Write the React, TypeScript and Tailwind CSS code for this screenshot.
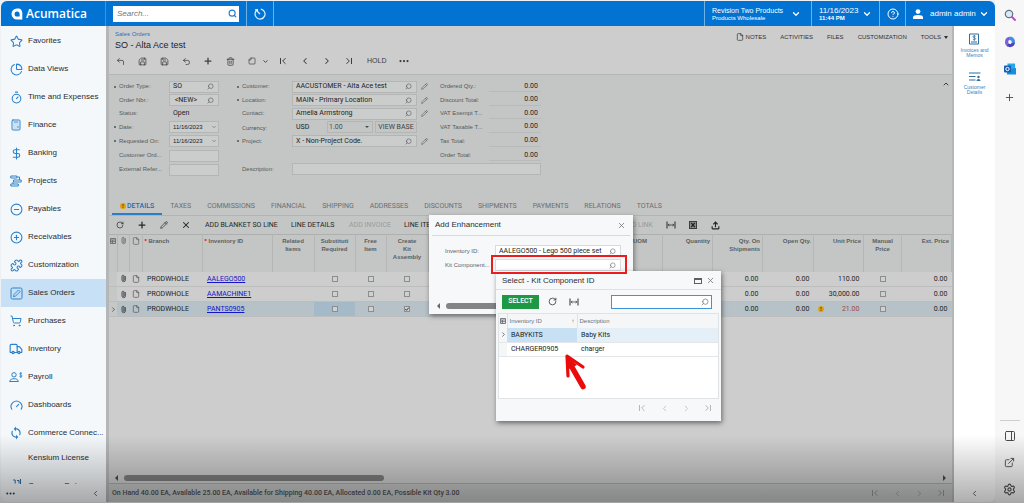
import { ReactNode } from 'react';
import {
  Calculator,
  ChartPie,
  ChevronDown,
  ChevronLeft,
  ChevronRight,
  ChevronUp,
  CircleHelp,
  CircleMinus,
  CirclePlus,
  CornerUpLeft,
  DollarSign,
  Ellipsis,
  ExternalLink,
  File,
  Gauge,
  PanelRight,
  Paperclip,
  Pencil,
  Plus,
  Puzzle,
  RotateCw,
  Save,
  Search,
  Settings,
  ShoppingCart,
  Star,
  StickyNote,
  Timer,
  Trash2,
  Truck,
  Undo2,
  Upload,
  X,
} from 'lucide-react';
import { MdSync } from 'react-icons/md';

const body = "font-['Roboto','Liberation_Sans',sans-serif] text-[7px]";

/* ---------- small drawings ---------- */

function StepIcon({ dir }: { dir: 'first' | 'last' }) {
  return (
    <svg viewBox="0 0 8 8" className={`size-2 ${dir === 'last' ? '-scale-x-100' : ''}`} fill="none" stroke="currentColor">
      <path d="M1.5 1v6M6.5 1.2 3.7 4l2.8 2.8" />
    </svg>
  );
}

function FitIcon() {
  return (
    <svg viewBox="0 0 10 8" className="h-2 w-2.5" fill="none" stroke="currentColor">
      <path d="M1 .5v7M9 .5v7" />
      <path d="M2 4h6M3.400 2.800 2.200 4l1.200 1.200M6.600 2.800 7.800 4 6.600 5.200" strokeWidth=".7" />
    </svg>
  );
}

function SheetIcon() {
  return (
    <svg viewBox="0 0 8 8" className="size-2">
      <rect x=".5" y=".5" width="7" height="7" fill="#8b8d8c" stroke="#3c3e3d" />
      <path d="m2.2 1.8 3.6 4.4M5.8 1.8 2.2 6.2" stroke="#202221" strokeWidth="1.3" />
    </svg>
  );
}

function GridIcon() {
  return (
    <svg viewBox="0 0 6 6" className="mx-auto size-1.5" fill="none" stroke="#5f6366" strokeWidth=".8">
      <path d="M.5.5h5v5h-5zM.5 2h5M.5 3.7h5M2.4 2v3.5" />
    </svg>
  );
}

function WarnIcon() {
  return (
    <svg viewBox="0 0 6 6" className="size-1.5 shrink-0">
      <circle cx="3" cy="3" r="3" fill="#e0a00c" />
      <path d="M3 1v2.4M3 4.1V5" stroke="#5c4204" strokeWidth=".9" />
    </svg>
  );
}

function ProjectsIcon() {
  return (
    <svg viewBox="0 0 12 12" className="size-3" fill="none" stroke="currentColor">
      <path d="M.8 1h6v2h-6zM3.5 5h7.700v2H3.500zM.8 9h7.500v2H.8zM7 2h2.500v3M3 7v2" />
    </svg>
  );
}

function SalesIcon() {
  return (
    <svg viewBox="0 0 13 13" className="size-[13px]" fill="none" stroke="currentColor">
      <rect x="1" y="1" width="11" height="11" rx="1.500" />
      <path d="m3.500 9.700.5-2.200L8.500 3l1.600 1.600-4.500 4.500z" strokeWidth=".9" />
    </svg>
  );
}

function PayrollIcon() {
  return (
    <svg viewBox="0 0 14 12" className="h-3 w-3.5" fill="none" stroke="currentColor">
      <circle cx="5" cy="3.800" r="2.200" />
      <path d="M.6 10.500c.4-2 2.200-2.800 4.400-2.800s4 .8 4.400 2.800z" />
      <path d="M13 2.600c-.4-.6-2.400-.7-2.400.4S13.100 3.900 13.100 5s-2.200 1.100-2.700.3M11.800 1v6" strokeWidth=".8" />
    </svg>
  );
}

function CommunityIcon() {
  return (
    <svg viewBox="0 0 12 6" className="h-1.5 w-3" fill="none" stroke="currentColor">
      <path d="M1 5.500h3M3.200 1h2v3.500M7 1.500h2v3M10.500 0v6M6.500 5.500h4" />
    </svg>
  );
}

function LogoMark() {
  return (
    <svg viewBox="0 0 12 12" className="size-3 shrink-0">
      <path d="M6 .5h1.500c2 0 3.800 2 3.800 4.500v6.500H6A5.500 5.500 0 0 1 6 .5Z" fill="#fff" />
      <path d="M6.100 3.400c1.600 0 2.500 1 2.500 2.500v2.600H6.100a2.500 2.500 0 0 1 0-5.100Z" fill="#0273d3" />
    </svg>
  );
}

function UserIcon() {
  return (
    <svg viewBox="0 0 10 10" className="size-2.5 shrink-0" fill="#fff">
      <circle cx="5" cy="2.600" r="2.400" />
      <path d="M0 10V8.300C0 6.700 2 5.900 5 5.900s5 .8 5 2.400V10z" />
    </svg>
  );
}

function HistoryIcon() {
  return (
    <svg viewBox="0 0 12 12" className="size-3" fill="none" stroke="#e3f0fb" strokeWidth="1.200">
      <path d="M3.200 1.900A5 5 0 1 0 6.800 1.100M1 1.800l2.400-.1.200 2.400M6 6.200 4 4" />
    </svg>
  );
}

function InvoiceIcon() {
  return (
    <svg viewBox="0 0 12 12" className="size-3" fill="none" stroke="#2f6e9e">
      <path d="M1.500 1h9v10h-9zM3 9h6" />
      <path d="M7.600 3.200c-.5-.6-2.600-.6-2.600.5s2.700.7 2.700 1.900-2.300 1.200-2.900.4M6.300 2v6" strokeWidth=".8" />
    </svg>
  );
}

function CustomerIcon() {
  return (
    <svg viewBox="0 0 12 10" className="h-2.5 w-3" fill="none" stroke="#2f6e9e" strokeWidth="1.100">
      <path d="M0 1h11.500M0 4.500h6.500M0 8h6.500" />
      <circle cx="9.500" cy="5" r="1.200" fill="#2f6e9e" stroke="none" />
      <path d="M7.500 9c0-2.800 4-2.800 4 0z" fill="#2f6e9e" stroke="none" />
    </svg>
  );
}

function OfficeIcon() {
  return (
    <svg viewBox="0 0 12 12" className="size-3">
      <path d="M5.500.8C3 1 1 2.800 1 6c0 1.800.6 3 1.800 4 .2-1.500.9-2.300 1.700-2.800C4 6 4.200 4.600 5.300 4.100L8 3z" fill="#7a5fd6" />
      <path d="M5.500.8C8.500.4 11 2.500 11 6v1.200L7.800 6.400C7.900 5 7 4 5.300 4.100 4.800 3 4.700 1.800 5.500.8z" fill="#3f8fe8" />
      <path d="M11 6.800c-.3 2.600-2.300 4.400-5 4.400-1.400 0-2.400-.4-3.200-1.200.2-1.500.9-2.300 1.700-2.800 1 1.200 2.600 1 3.300-.8z" fill="#4a46b8" />
    </svg>
  );
}

function OutlookIcon() {
  return (
    <svg viewBox="0 0 12 12" className="size-3">
      <path d="M3.500.5H11V7H3.500z" fill="#28a8ea" />
      <path d="M3 6.500 12 5v6.500H3z" fill="#1490df" />
      <rect y="2.500" width="7" height="7" rx="1" fill="#0f5fb4" />
      <circle cx="3.500" cy="6" r="1.700" fill="none" stroke="#fff" />
    </svg>
  );
}

/* ---------- shared parts ---------- */

function IconButton({ label, className = 'w-[22px]', children }: { label: string; className?: string; children: ReactNode }) {
  return (
    <button type="button" aria-label={label} className={`flex h-3.5 shrink-0 items-center justify-center ${className}`}>
      {children}
    </button>
  );
}

function Label({ id, required, children }: { id?: string; required?: boolean; children: ReactNode }) {
  return (
    <label htmlFor={id} className="flex w-[55px] shrink-0 items-center text-[6px] whitespace-nowrap text-[#56595a]">
      <span className="flex w-[5px] shrink-0">{required && <span className="size-0.5 rounded-full bg-[#4d5051]" />}</span>
      {children}
    </label>
  );
}

type FieldIcon = 'search' | 'date';

interface FieldProps {
  id: string;
  label: string;
  value?: string;
  required?: boolean;
  icon?: FieldIcon;
  edit?: boolean;
  width?: string;
}

function Field({ id, label, value = '', required, icon, edit, width = 'w-[50px]' }: FieldProps) {
  return (
    <div className="flex items-center">
      <Label id={id} required={required}>{label}</Label>
      <div className={`flex h-3 items-center border border-[#b4b6b6] bg-[#cbcccc] ${icon === 'date' ? 'pr-px' : 'pr-1'} ${width}`}>
        <input
          id={id}
          defaultValue={value}
          className={`w-full min-w-0 bg-transparent pl-[3px] text-[#1b1d1e] outline-none ${icon === 'date' ? 'text-[6px] font-medium' : body}`}
        />
        {icon === 'search' && <Search size={7} className="shrink-0 -scale-x-100 text-[#55585a]" />}
        {icon === 'date' && <ChevronDown size={6} className="shrink-0 text-[#55585a]" />}
      </div>
      {edit && (
        <button type="button" aria-label={`Edit ${label}`} className="ml-1">
          <Pencil size={7} strokeWidth={2} className="text-[#55585a]" />
        </button>
      )}
    </div>
  );
}

/* ---------- left navigation ---------- */

const navItems: { label: string; icon: ReactNode; active?: boolean }[] = [
  { label: 'Favorites', icon: <Star size={13} /> },
  { label: 'Data Views', icon: <ChartPie size={13} /> },
  { label: 'Time and Expenses', icon: <Timer size={13} /> },
  { label: 'Finance', icon: <Calculator size={12} /> },
  { label: 'Banking', icon: <DollarSign size={13} /> },
  { label: 'Projects', icon: <ProjectsIcon /> },
  { label: 'Payables', icon: <CircleMinus size={13} /> },
  { label: 'Receivables', icon: <CirclePlus size={13} /> },
  { label: 'Customization', icon: <Puzzle size={13} /> },
  { label: 'Sales Orders', icon: <SalesIcon />, active: true },
  { label: 'Purchases', icon: <ShoppingCart size={12} /> },
  { label: 'Inventory', icon: <Truck size={14} /> },
  { label: 'Payroll', icon: <PayrollIcon /> },
  { label: 'Dashboards', icon: <Gauge size={13} /> },
  { label: 'Commerce Connec...', icon: <MdSync size={14} /> },
];

function Sidebar() {
  return (
    <aside className="flex w-[105px] shrink-0 flex-col bg-[#f5f8fb]">
      <nav className="min-h-0 flex-1 overflow-hidden pt-px">
        {navItems.map((item) => (
          <a
            key={item.label}
            href="#"
            className={`flex h-7 items-center text-[8px] whitespace-nowrap text-[#262d33] ${item.active ? 'bg-[#c7e0f5]' : ''}`}
          >
            <span className="flex w-[27px] shrink-0 items-center justify-center pl-[3px] text-[#2b82cc]">{item.icon}</span>
            {item.label}
          </a>
        ))}
        <a href="#" className="flex h-[22px] items-center pl-[27px] text-[8px] text-[#262d33]">Kensium License</a>
        <a href="#" className="flex items-start pt-2.5 text-[8px] leading-[10px] text-[#262d33]">
          <span className="flex w-[27px] shrink-0 justify-center pl-[3px] text-[#2b6ca3]"><CommunityIcon /></span>
          <span className="pt-0.5">Company Data</span>
        </a>
      </nav>
      <div className="flex h-[18px] shrink-0 items-center justify-between pr-1.5 pl-1 text-[#3b3f42]">
        <button type="button" aria-label="More items"><Ellipsis size={11} strokeWidth={2.5} /></button>
        <button type="button" aria-label="Collapse menu"><ChevronLeft size={9} /></button>
      </div>
    </aside>
  );
}

/* ---------- top bar ---------- */

function TopBar() {
  return (
    <header className="flex h-[25px] shrink-0 items-stretch rounded-t-md bg-[#0273d3] text-white">
      <a href="#" className="flex w-[105px] items-center gap-[3px] border-r border-[#3c94dd] pl-2.5">
        <LogoMark />
        <span className="font-['Open_Sans','Noto_Sans',sans-serif] text-[12px] leading-none font-semibold">Acumatica</span>
      </a>
      <div className="flex w-[141px] items-center border-r border-[#6fb0e6] pl-[7px]">
        <div className="flex h-4 w-[126px] items-center bg-white pr-0.5">
          <input aria-label="Search" placeholder="Search..." className="w-full min-w-0 pl-1 text-[8px] text-[#333] italic outline-none placeholder:text-[#6f7479]" />
          <Search size={9} strokeWidth={3} className="shrink-0 text-[#2a7ecb]" />
        </div>
      </div>
      <button type="button" aria-label="Recent" className="flex w-[27px] items-center justify-center border-r border-[#6fb0e6]"><HistoryIcon /></button>
      <div className="flex-1" />
      <button type="button" className="flex w-[107px] items-center border-l border-[#6fb0e6] pl-[7px] text-left">
        <span className="w-[79px] leading-none whitespace-nowrap">
          <span className="block text-[7px] leading-[9px]">Revision Two Products</span>
          <span className="block text-[6px] leading-[7px] font-medium">Products Wholesale</span>
        </span>
        <ChevronDown size={10} strokeWidth={3} />
      </button>
      <button type="button" className="flex w-[68px] items-center border-l border-[#6fb0e6] pl-[7px] text-left">
        <span className="w-[43px]">
          <span className="block text-[8px] leading-[9px]">11/16/2023</span>
          <span className="block text-[6px] leading-[7px] font-bold">11:44 PM</span>
        </span>
        <ChevronDown size={10} strokeWidth={3} />
      </button>
      <button type="button" aria-label="Help" className="flex w-[26px] items-center justify-center border-l border-[#6fb0e6]"><CircleHelp size={12} /></button>
      <button type="button" className="flex w-[90px] items-center border-l border-[#6fb0e6] pl-[7px] text-[8px]">
        <UserIcon />
        <span className="w-[54px] pl-[7px] text-left whitespace-nowrap">admin admin</span>
        <ChevronDown size={10} strokeWidth={3} className="ml-0.5" />
      </button>
    </header>
  );
}

/* ---------- document header and form ---------- */

function DocumentHeader() {
  return (
    <div className="flex h-[49px] shrink-0 justify-between border-b border-[#b4b5b5] pr-1 pl-1.5">
      <div>
        <a href="#" className="mt-1 block h-2 text-[6px] leading-[8px] text-[#2a73b4]">Sales Orders</a>
        <h1 className="mt-px h-3 text-[9px] leading-3 text-[#212325]">SO - Alta Ace test</h1>
        <div className="mt-[3px] -ml-1.5 flex items-center text-[#3b3e40]">
          <IconButton label="Back"><CornerUpLeft size={9} /></IconButton>
          <IconButton label="Save and close"><Save size={9} className="-scale-x-100" /></IconButton>
          <IconButton label="Save"><Save size={9} /></IconButton>
          <IconButton label="Undo"><Undo2 size={9} /></IconButton>
          <IconButton label="Add"><Plus size={10} strokeWidth={3} /></IconButton>
          <IconButton label="Delete"><Trash2 size={9} /></IconButton>
          <IconButton label="Copy"><StickyNote size={8} className="-scale-x-100" /></IconButton>
          <IconButton label="Copy options" className="w-[5px]"><ChevronDown size={7} strokeWidth={3} className="shrink-0" /></IconButton>
          <IconButton label="First record" className="ml-1 w-[22px]"><StepIcon dir="first" /></IconButton>
          <IconButton label="Previous record"><ChevronLeft size={10} strokeWidth={2.5} /></IconButton>
          <IconButton label="Next record"><ChevronRight size={10} strokeWidth={2.5} /></IconButton>
          <IconButton label="Last record"><StepIcon dir="last" /></IconButton>
          <button type="button" className="ml-[7px] text-[7px]">HOLD</button>
          <IconButton label="More actions" className="ml-2 w-5"><Ellipsis size={12} strokeWidth={2.5} /></IconButton>
        </div>
      </div>
      <div className="mt-1.5 flex h-2.5 items-center gap-3.5 text-[6px] font-medium text-[#2d3032]">
        <button type="button" className="flex items-center gap-0.5"><File size={8} /> NOTES</button>
        <button type="button">ACTIVITIES</button>
        <button type="button">FILES</button>
        <button type="button">CUSTOMIZATION</button>
        <button type="button" className="flex items-center gap-[3px]">
          TOOLS
          <span className="border-x-2 border-t-[3px] border-x-transparent border-t-current" />
        </button>
      </div>
    </div>
  );
}

const totals = ['Ordered Qty.:', 'Discount Total:', 'VAT Exempt T...', 'VAT Taxable T...', 'Tax Total:', 'Order Total:'];

function OrderForm() {
  return (
    <form className="flex pt-[5px] pl-[5px]">
      <div className="mr-[18px] grid grid-rows-[13px_14px_13px_14px_14px_15px_13px]">
        <Field id="type" label="Order Type:" value="SO" required icon="search" />
        <Field id="nbr" label="Order Nbr.:" value=" <NEW>" icon="search" />
        <div className="flex items-center">
          <Label>Status:</Label>
          <span className={`pl-1 text-[#1b1d1e] ${body}`}>Open</span>
        </div>
        <Field id="date" label="Date:" value="11/16/2023" required icon="date" />
        <Field id="requested" label="Requested On:" value="11/16/2023" required icon="date" />
        <Field id="custord" label="Customer Ord..." />
        <Field id="extref" label="External Refer..." />
      </div>
      <div>
        <div className="flex">
          <div className="mr-3 grid grid-rows-[13px_14px_13px_14px_14px_15px]">
            <Field id="customer" label="Customer:" value="AACUSTOMER - Alta Ace test" required icon="search" edit width="w-[125px]" />
            <Field id="location" label="Location:" value="MAIN - Primary Location" required icon="search" edit width="w-[125px]" />
            <Field id="contact" label="Contact:" value="Amelia Armstrong" icon="search" edit width="w-[125px]" />
            <div className={`flex items-center text-[#1b1d1e] ${body}`}>
              <Label id="rate">Currency:</Label>
              <span className="w-[35px] pl-1">USD</span>
              <div className="flex h-3 w-[46px] items-center border border-[#b4b6b6]">
                <select id="rate" className="w-full appearance-none pl-px text-[#4a4d4f]">
                  <option>1.00</option>
                </select>
                <span className="mr-[3px] border-x-2 border-t-2 border-x-transparent border-t-[#4a4d4f]" />
              </div>
              <button type="button" className="ml-0.5 h-3 w-[42px] border border-[#b4b6b6] whitespace-nowrap text-[#3f4244]">VIEW BASE</button>
            </div>
            <Field id="project" label="Project:" value="X - Non-Project Code." required icon="search" edit width="w-[125px]" />
          </div>
          <dl className="grid w-[101px] grid-rows-[13px_14px_13px_14px_14px_15px]">
            {totals.map((t) => (
              <div key={t} className="flex items-center text-[6px] text-[#56595a]">
                <dt className="w-[49px] whitespace-nowrap">{t}</dt>
                <dd className={`flex-1 border-b border-[#b9bbbb] pr-[3px] text-right text-[#1b1d1e] ${body}`}>0.00</dd>
              </div>
            ))}
          </dl>
        </div>
        <Field id="desc" label="Description:" width="w-[249px]" />
      </div>
      <button type="button" aria-label="Collapse form" className="mr-0.5 ml-auto h-2 text-[#3b3e40]"><ChevronUp size={8} strokeWidth={3} /></button>
    </form>
  );
}

/* ---------- order lines ---------- */

const tabs = ['TAXES', 'COMMISSIONS', 'FINANCIAL', 'SHIPPING', 'ADDRESSES', 'DISCOUNTS', 'SHIPMENTS', 'PAYMENTS', 'RELATIONS', 'TOTALS'];

const lines = [
  { id: 'AALEGO500', price: '110.00', kit: false },
  { id: 'AAMACHINE1', price: '30,000.00', kit: false },
  { id: 'PANTS0905', price: '21.00', kit: true },
];

function Check({ label, checked = false }: { label: string; checked?: boolean }) {
  return (
    <span className="relative mx-auto flex size-1.5">
      <input
        type="checkbox"
        aria-label={label}
        defaultChecked={checked}
        className="size-1.5 appearance-none border border-[#8b8e90] bg-[#cfd0d0]"
      />
      {checked && (
        <svg viewBox="0 0 6 6" className="pointer-events-none absolute inset-0" fill="none" stroke="#33373a">
          <path d="m1.300 3 1.200 1.300 2.300-2.700" />
        </svg>
      )}
    </span>
  );
}

function LineTabs() {
  return (
    <div role="tablist" className={`mt-[21px] flex h-[19px] items-stretch gap-4 border-b border-[#b2b4b4] pl-[3px] text-[#6b6e70] ${body}`}>
      <button type="button" role="tab" aria-selected="true" className="-mr-2 flex items-center border-b-2 border-[#2a7fc6] px-2 pt-0.5 font-medium text-[#1f6bb0]">
        <WarnIcon />
        <span className="pl-px">DETAILS</span>
      </button>
      {tabs.map((t) => (
        <button key={t} type="button" role="tab" aria-selected="false">{t}</button>
      ))}
    </div>
  );
}

function LineToolbar() {
  return (
    <div className={`flex h-[18px] items-center text-[#232628] ${body}`}>
      <IconButton label="Refresh"><RotateCw size={8} /></IconButton>
      <IconButton label="Add line"><Plus size={10} strokeWidth={3} /></IconButton>
      <IconButton label="Edit line"><Pencil size={8} /></IconButton>
      <IconButton label="Delete line"><X size={10} strokeWidth={2.5} /></IconButton>
      <button type="button" className="ml-2 w-[86px] text-left whitespace-nowrap">ADD BLANKET SO LINE</button>
      <button type="button" className="w-[58px] text-left whitespace-nowrap">LINE DETAILS</button>
      <button type="button" disabled className="w-[55px] text-left whitespace-nowrap text-[#989b9c]">ADD INVOICE</button>
      <button type="button" className="w-[80px] text-left whitespace-nowrap">LINE ITEMS</button>
      <button type="button" disabled className="w-[169px] text-right whitespace-nowrap text-[#989b9c]">PO LINK</button>
      <IconButton label="Fit to screen" className="ml-[7px] w-[22px]"><FitIcon /></IconButton>
      <IconButton label="Export to Excel"><SheetIcon /></IconButton>
      <IconButton label="Upload"><Upload size={9} strokeWidth={3} /></IconButton>
    </div>
  );
}

function LinesTable() {
  const th = 'border-r border-[#b5b7b7] px-0.5 pt-0.5 align-top font-semibold';
  const num = 'pr-1 text-right';
  return (
    <table className="w-full table-fixed border-collapse border-t border-[#aeb0b0]">
      <colgroup>
        <col className="w-2" />
        <col className="w-3" />
        <col className="w-[13px]" />
        <col className="w-[60px]" />
        <col className="w-[70px]" />
        <col className="w-[42px]" />
        <col className="w-[41px]" />
        <col className="w-[31px]" />
        <col className="w-[42px]" />
        <col />
        <col className="w-8" />
        <col className="w-[50px]" />
        <col className="w-[50px]" />
        <col className="w-[51px]" />
        <col className="w-[50px]" />
        <col className="w-[38px]" />
        <col className="w-[50px]" />
      </colgroup>
      <thead>
        <tr className="h-[37px] text-[6px] leading-[8px] text-[#5b5e60]">
          <th className="border-r border-[#b5b7b7] pt-[3px] align-top"><GridIcon /></th>
          <th className={th}><Paperclip size={7} className="mx-auto -rotate-45" /></th>
          <th className={th}><File size={8} className="mx-auto" /></th>
          <th className={`${th} text-left`}><span className="text-red-600">*</span> Branch</th>
          <th className={`${th} text-left`}><span className="text-red-600">*</span> Inventory ID</th>
          <th className={th}>Related Items</th>
          <th className={`${th} overflow-hidden`}>Substituti Required</th>
          <th className={th}>Free<br />Item</th>
          <th className={th}>Create<br />Kit<br />Assembly</th>
          <th className={th} />
          <th className={`${th} text-left`}>UOM</th>
          <th className={`${th} text-right`}>Quantity</th>
          <th className={`${th} text-right`}>Qty. On Shipments</th>
          <th className={`${th} text-right`}>Open Qty.</th>
          <th className={`${th} text-right`}>Unit Price</th>
          <th className={th}>Manual Price</th>
          <th className={`${th} text-right`}>Ext. Price</th>
        </tr>
      </thead>
      <tbody className={`text-[#1d1f20] ${body}`}>
        {lines.map((line, i) => (
          <tr key={line.id} className={`h-[15px] border-b border-[#bcbebe] leading-[8px] ${line.kit ? 'bg-[#b6c1c8]' : 'bg-[#cdcdcd]'}`}>
            <td className="bg-[#c6c8c8]">{i === 2 && <ChevronRight size={7} className="mx-auto" />}</td>
            <td><Paperclip size={7} strokeWidth={3} className="mx-auto -rotate-45 text-[#4e5153]" /></td>
            <td><File size={8} className="mx-auto text-[#4e5153]" /></td>
            <td className="pl-[5px]">PRODWHOLE</td>
            <td className="pl-[5px]"><a href="#" className="text-[#1414c8] underline">{line.id}</a></td>
            <td />
            <td className={line.kit ? 'bg-[#a5bac8]' : ''}><Check label="Substitution required" /></td>
            <td><Check label="Free item" /></td>
            <td><Check label="Create kit assembly" checked={line.kit} /></td>
            <td />
            <td />
            <td />
            <td className={num}>0.00</td>
            <td className={num}>0.00</td>
            <td className={num}>
              <span className="flex items-center justify-between pl-1">
                {line.kit ? <WarnIcon /> : <span />}
                <span className={line.kit ? 'text-[#9c4a44]' : ''}>{line.price}</span>
              </span>
            </td>
            <td><Check label="Manual price" /></td>
            <td className={num}>0.00</td>
          </tr>
        ))}
      </tbody>
    </table>
  );
}

function Pager({ className }: { className: string }) {
  return (
    <div className={`flex items-center ${className}`}>
      <IconButton label="First page"><StepIcon dir="first" /></IconButton>
      <IconButton label="Previous page"><ChevronLeft size={9} /></IconButton>
      <IconButton label="Next page"><ChevronRight size={9} /></IconButton>
      <IconButton label="Last page"><StepIcon dir="last" /></IconButton>
    </div>
  );
}

/* ---------- dialogs ---------- */

function EnhancementDialog() {
  return (
    <section role="dialog" aria-label="Add Enhancement" className="absolute top-[215px] left-[429px] flex h-[99px] w-[204px] flex-col bg-[#f6f8fa] px-[3px] text-[#2b2f33] shadow-[1px_2px_5px_rgba(0,0,0,0.45)]">
      <div className="flex h-[21px] shrink-0 items-center justify-between border-b border-[#d5d9dd] pr-1 pl-[3px]">
        <h2 className="text-[8px]">Add Enhancement</h2>
        <button type="button" aria-label="Close"><X size={9} className="text-[#6b7075]" /></button>
      </div>
      <div className="mt-[9px] flex flex-col pl-[13px] text-[6px] text-[#5d6368]">
        <div className="flex h-3 items-center">
          <label htmlFor="kit-inventory" className="w-[50px] shrink-0">Inventory ID:</label>
          <div className="flex h-3 w-[126px] items-center border border-[#d8dcdf] bg-white pr-1">
            <input id="kit-inventory" defaultValue="AALEGO500 - Lego 500 piece set" className={`w-full min-w-0 pl-[3px] text-[#1b1d1e] outline-none ${body}`} />
            <Search size={7} className="shrink-0 -scale-x-100 text-[#666b70]" />
          </div>
        </div>
        <div className="flex h-4 items-center">
          <label htmlFor="kit-component" className="w-[50px] shrink-0 whitespace-nowrap">Kit Component...</label>
          <div className="flex h-3 w-[126px] items-center border border-[#d8dcdf] bg-white pr-1">
            <input id="kit-component" className={`w-full min-w-0 pl-[3px] outline-none ${body}`} />
            <Search size={7} className="shrink-0 -scale-x-100 text-[#666b70]" />
          </div>
        </div>
      </div>
      <div className="mt-auto mb-1 flex h-2 items-center gap-1.5 pl-[5px]">
        <span className="border-y-[3px] border-r-[3px] border-y-transparent border-r-[#666]" />
        <span className="h-1.5 w-[140px] rounded-full bg-[#828486]" />
      </div>
    </section>
  );
}

const kits = [
  { id: 'BABYKITS', description: 'Baby Kits' },
  { id: 'CHARGER0905', description: 'charger' },
];

function SelectDialog() {
  return (
    <section role="dialog" aria-label="Select - Kit Component ID" className="absolute top-[271px] left-[496px] flex h-[150px] w-[225px] flex-col bg-[#f6f8fa] text-[#2b2f33] shadow-[1px_2px_5px_rgba(0,0,0,0.5)]">
      <div className="flex h-[19px] shrink-0 items-center border-b border-[#dde1e4] px-1.5 pt-px">
        <h2 className="text-[8px]">Select - Kit Component ID</h2>
        <button type="button" aria-label="Maximize" className="mr-1 ml-auto h-1.5 w-2 border border-t-2 border-[#5b6065]" />
        <button type="button" aria-label="Close"><X size={9} className="text-[#6b7075]" /></button>
      </div>
      <div className="flex h-[23px] items-center pr-[9px] pl-1.5">
        <button type="button" className={`flex h-3.5 w-[37px] items-center justify-center bg-[#1f9845] font-medium text-white ${body}`}>SELECT</button>
        <IconButton label="Refresh" className="ml-0.5 w-[22px]"><RotateCw size={9} /></IconButton>
        <IconButton label="Fit to screen"><FitIcon /></IconButton>
        <div className="ml-auto flex h-3.5 w-[101px] items-center border border-[#3f94d8] bg-white pr-0.5">
          <input aria-label="Find kit" className={`w-full min-w-0 pl-1 outline-none ${body}`} />
          <Search size={8} className="shrink-0 -scale-x-100 text-[#666b70]" />
        </div>
      </div>
      <div className="mx-0.5 h-[86px] border border-[#dfe3e6] bg-white">
        <table className="w-full table-fixed border-collapse">
          <colgroup>
            <col className="w-2" />
            <col className="w-[70px]" />
            <col />
          </colgroup>
          <thead>
            <tr className="h-3.5 bg-[#f4f6f8] text-left text-[6px] leading-[7px] text-[#6a7076]">
              <th><GridIcon /></th>
              <th className="border-x border-[#dfe3e6] font-medium">
                <span className="flex justify-between px-0.5">Inventory ID<span>↑</span></span>
              </th>
              <th className="pl-0.5 font-medium">Description</th>
            </tr>
          </thead>
          <tbody className={`leading-[8px] text-[#1b1d1e] ${body}`}>
            {kits.map((kit, i) => (
              <tr key={kit.id} className={`h-3.5 border-b border-[#e3e7ea] ${i === 0 ? 'bg-[#e4eff8]' : ''}`}>
                <td className="bg-[#f4f6f8]">{i === 0 && <ChevronRight size={7} className="mx-auto" />}</td>
                <td className={`pl-1 ${i === 0 ? 'bg-[#c7e0f4]' : ''}`}>{kit.id}</td>
                <td className="pl-1">{kit.description}</td>
              </tr>
            ))}
          </tbody>
        </table>
      </div>
      <Pager className="mt-0.5 mr-0.5 ml-auto text-[#b3b8bc]" />
    </section>
  );
}

function Annotations() {
  return (
    <>
      <div className="pointer-events-none absolute top-[255px] left-[491px] h-[19px] w-[136px] border-2 border-[#ec1c1c]" />
      <svg viewBox="0 0 24 38" className="pointer-events-none absolute top-[353px] left-[563px] h-[38px] w-6" fill="none" stroke="#ea0b0b" strokeLinecap="round">
        <path d="M6 9 20 33.500" strokeWidth="5.500" />
        <path d="M5 23 4 3l16 11" strokeWidth="3.200" strokeLinejoin="round" />
        <path d="M3.500 3 6 16l8-4z" fill="#ea0b0b" stroke="none" />
      </svg>
    </>
  );
}

/* ---------- right side ---------- */

function SidePanel() {
  return (
    <aside className="flex w-[41px] shrink-0 flex-col items-center bg-white text-center text-[5px] leading-[5px] text-[#3b82bd]">
      <a href="#" className="mt-[7px] flex flex-col items-center gap-[3px]"><InvoiceIcon />Invoices and<br />Memos</a>
      <a href="#" className="mt-3.5 flex flex-col items-center gap-[3px]"><CustomerIcon />Customer<br />Details</a>
      <button type="button" aria-label="Expand panel" className="mt-auto mb-1"><ChevronLeft size={9} className="text-[#3b3f42]" /></button>
    </aside>
  );
}

function EdgeBar() {
  return (
    <aside className="flex w-[29px] shrink-0 flex-col items-center gap-[15px] bg-[#f7f7f7] pt-[9px] pb-[7px] text-[#4b4b4b]">
      <button type="button" aria-label="Search">
        <svg viewBox="0 0 12 12" className="size-3" fill="none">
          <circle cx="5" cy="5" r="3.700" fill="#d8ecf8" stroke="#68717a" strokeWidth="1.200" />
          <path d="m8 8 3 3" stroke="#b04ac0" strokeWidth="1.800" strokeLinecap="round" />
        </svg>
      </button>
      <button type="button" aria-label="Microsoft 365"><OfficeIcon /></button>
      <button type="button" aria-label="Outlook"><OutlookIcon /></button>
      <button type="button" aria-label="Customize" className="mt-0.5"><Plus size={11} /></button>
      <div className="mt-auto -mb-[7px] w-5 border-t border-[#cfcfcf]" />
      <button type="button" aria-label="Split view" className="mt-px"><PanelRight size={12} /></button>
      <button type="button" aria-label="Open link"><ExternalLink size={11} /></button>
      <button type="button" aria-label="Settings"><Settings size={13} /></button>
    </aside>
  );
}

export default function App() {
  return (
    <div className="relative flex h-screen w-full overflow-hidden bg-[#eef1f3] font-['Liberation_Sans',Arial,sans-serif]">
      <div className="flex min-w-0 flex-1 flex-col pt-px pl-px">
        <TopBar />
        <div className="mb-px flex min-h-0 flex-1 overflow-hidden rounded-b-md">
          <Sidebar />
          <main className="flex min-w-0 flex-1 flex-col border-r-2 border-l-[3px] border-[#b4b6b8] bg-[#cdcdcd]">
            <DocumentHeader />
            <div className="bg-[#c4c6c5]">
              <OrderForm />
              <LineTabs />
              <LineToolbar />
              <LinesTable />
            </div>
            <div className="mt-auto flex h-2.5 items-center gap-1.5 px-1.5">
              <span className="border-y-[3px] border-r-[3px] border-y-transparent border-r-[#4a4a4a]" />
              <span className="h-1.5 w-[260px] rounded-full bg-[#7d7d7d]" />
              <span className="ml-auto border-y-[3px] border-l-[3px] border-y-transparent border-l-[#4a4a4a]" />
            </div>
            <footer className="flex h-[19px] shrink-0 items-center justify-between border-t border-[#a9abaa] bg-[#c4c6c5] pl-[3px]">
              <p className={`font-medium text-[#4b4d4e] ${body}`}>
                On Hand 40.00 EA, Available 25.00 EA, Available for Shipping 40.00 EA, Allocated 0.00 EA, Possible Kit Qty 3.00
              </p>
              <Pager className="text-[#8f9191]" />
            </footer>
          </main>
          <SidePanel />
        </div>
      </div>
      <EdgeBar />
      <EnhancementDialog />
      <SelectDialog />
      <Annotations />
      <div className="pointer-events-none absolute inset-x-0 bottom-0 h-[68px] bg-linear-to-b from-transparent to-black/32" />
    </div>
  );
}
